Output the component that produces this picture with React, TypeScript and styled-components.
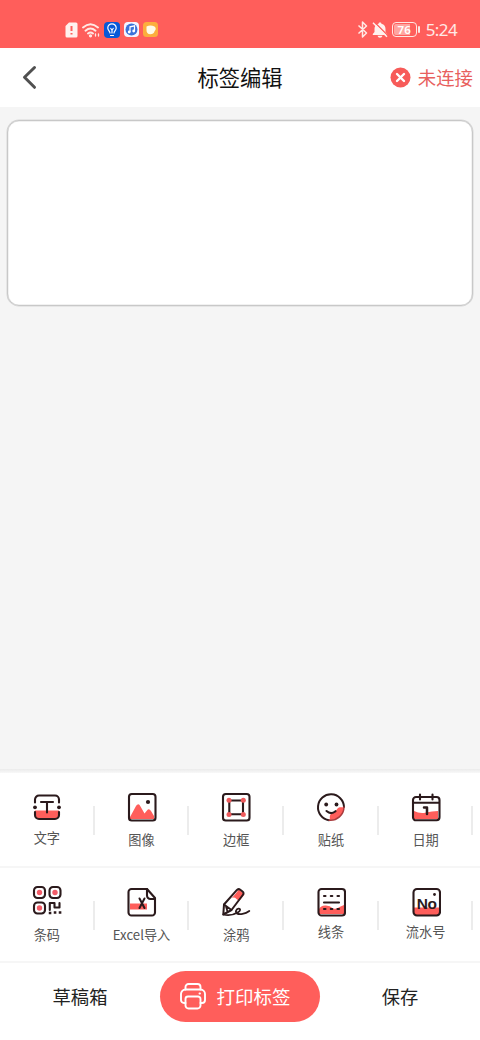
import React from 'react';
import styled, { createGlobalStyle } from 'styled-components';

const RED = '#ff5e5b';
const INK = '#2b1a1c';

const GlobalStyle = createGlobalStyle`
  * { box-sizing: border-box; }
  body {
    margin: 0;
    background: #fff;
    font-family: 'Noto Sans CJK SC', 'Noto Sans', sans-serif;
  }
  svg { display: block; flex: none; }
`;

const Screen = styled.div`
  width: 480px;
  height: 1040px;
  display: flex;
  flex-direction: column;
  background: #fff;
  overflow: hidden;
`;

const StatusBar = styled.header`
  height: 48px;
  flex: none;
  display: flex;
  justify-content: space-between;
  padding: 12px 23px 0 65px;
  background: ${RED};
`;

const StatusGroup = styled.div<{ $gap: number }>`
  display: flex;
  align-items: center;
  gap: ${p => p.$gap}px;
  height: 35px;
`;

const Battery = styled.div`
  display: flex;
  align-items: center;
  gap: 1px;
  &::after {
    content: '';
    width: 2px;
    height: 7px;
    border-radius: 1px;
    background: #ffe6e2;
  }
`;

const BatteryLevel = styled.span`
  width: 25px;
  height: 15px;
  border: 1.5px solid #ffe6e2;
  border-radius: 4px;
  background: linear-gradient(90deg, #ffa5a0 76%, transparent 76%) content-box;
  padding: 1px;
  color: #fff;
  font: 600 11.5px/11px 'Noto Sans', sans-serif;
  text-align: center;
`;

const Clock = styled.span`
  margin-left: 2px;
  color: #ffe9e6;
  font: 400 17px/20px 'Noto Sans', sans-serif;
  letter-spacing: -0.6px;
  padding-top: 1px;
`;

const TitleBar = styled.nav`
  height: 59px;
  flex: none;
  display: grid;
  grid-template-columns: 1fr auto 1fr;
  align-items: center;
  padding: 0 7px 0 21px;
`;

const Title = styled.h1`
  margin: -2px 14px 0 0;
  color: #111;
  font-size: 21.3px;
  line-height: 30px;
  font-weight: 400;
`;

const Connection = styled.div`
  display: flex;
  align-items: center;
  justify-content: flex-end;
  gap: 7px;
  color: #e8605d;
  font-size: 18.4px;
  line-height: 28px;
  margin-top: -1px;
`;

const Workspace = styled.main`
  flex: none;
  height: 666px;
  padding: 13px 7px 0;
  background: linear-gradient(#f5f5f5, #f5f5f5 662px, #ebebeb 662px, #f8f8f8 666px);
`;

const LabelCanvas = styled.div`
  height: 186px;
  border: 1px solid #c8c8c8;
  border-radius: 12px;
  background: #fff;
  box-shadow: 0 0 0 0.5px #d8d8d8, inset 0 0 0 0.5px #e4e4e4;
`;

const ToolRow = styled.section<{ $height: number }>`
  height: ${p => p.$height}px;
  flex: none;
  display: grid;
  grid-template-columns: repeat(5, 94.7px);
  border-bottom: 2px solid #f6f6f6;
`;

const Tool = styled.button<{ $top: number }>`
  display: flex;
  flex-direction: column;
  align-items: center;
  padding: ${p => p.$top}px 1px 0 0;
  border: 0;
  background: linear-gradient(#ececec, #ececec) right 0 top 33px / 2px 29px no-repeat;
  font-family: inherit;
`;

const ToolLabel = styled.span<{ $gap: number }>`
  margin-top: ${p => p.$gap}px;
  color: #555;
  font-size: 13.2px;
  line-height: 20px;
  white-space: nowrap;
`;

const ActionBar = styled.footer`
  height: 77px;
  flex: none;
  display: grid;
  grid-template-columns: 160px 160px 160px;
  padding-top: 8px;
`;

const TextAction = styled.button`
  height: 51px;
  padding: 0 0 2px;
  border: 0;
  background: none;
  color: #222;
  font: 400 18.3px/28px 'Noto Sans CJK SC', sans-serif;
`;

const PrintAction = styled.button`
  height: 51px;
  display: flex;
  align-items: center;
  justify-content: center;
  gap: 9px;
  padding: 0 10px 2px 0;
  border: 0;
  border-radius: 26px;
  background: ${RED};
  color: #fff;
  font: 400 18.5px/28px 'Noto Sans CJK SC', sans-serif;
`;

const Icon = ({ children }: { children: React.ReactNode }) => (
  <svg width="30" height="30" viewBox="0 0 30 30" fill="none" stroke={INK} strokeWidth="2.1" strokeLinecap="round" strokeLinejoin="round">
    {children}
  </svg>
);

const TextIcon = () => (
  <Icon>
    <path d="M3 18.5h24V23a4 4 0 0 1-4 4H7a4 4 0 0 1-4-4z" fill={RED} stroke="none" />
    <path d="M3 10.500V7.500a4 4 0 0 1 4-4h16a4 4 0 0 1 4 4v3M3 20v3a4 4 0 0 0 4 4h16a4 4 0 0 0 4-4v-3" />
    <path d="M9 10h12M15 10v10.500" />
    <circle cx="3" cy="15.300" r="1.900" fill={INK} stroke="none" />
    <circle cx="27" cy="15.300" r="1.900" fill={INK} stroke="none" />
  </Icon>
);

const ImageIcon = () => (
  <Icon>
    <path d="M2.500 26 9 14Q11.500 10.500 13.500 14.500L17.500 21.500 20 18.500Q22 16 24 19L27 24v3H3z" fill={RED} stroke="none" />
    <rect x="2" y="2" width="26.500" height="26.500" rx="2.800" />
    <circle cx="21" cy="10" r="2.100" fill={INK} stroke="none" />
  </Icon>
);

const FrameIcon = () => (
  <Icon>
    <rect x="2" y="2" width="26.500" height="26.500" rx="2.800" />
    <rect x="8.300" y="8.500" width="13.700" height="13.700" />
    <g fill="#ee5a5c" stroke="none">
      <circle cx="8" cy="8.300" r="2.500" /><circle cx="22.300" cy="8.300" r="2.500" />
      <circle cx="8" cy="22.500" r="2.500" /><circle cx="22.300" cy="22.500" r="2.500" />
    </g>
  </Icon>
);

const StickerIcon = () => (
  <Icon>
    <path d="M14 28C13 20.500 16 22 19 19.500S21 14.500 28 15.500C28 23 22 28 14 28z" fill={RED} stroke="none" />
    <path d="M13 28.200A13 13 0 1 1 28 15" strokeWidth="2" />
    <path d="M13 28.200A13.500 13.500 0 0 0 28 15" strokeWidth="1.500" stroke="#a93c3e" />
    <path d="M10.500 19q4.500 4 9 .2" />
    <circle cx="10.200" cy="12.500" r="1.900" fill={INK} stroke="none" />
    <circle cx="20.500" cy="12.500" r="1.900" fill={INK} stroke="none" />
  </Icon>
);

const DateIcon = () => (
  <Icon>
    <path d="M3 19q6 3 12 1.500T27 19v8H3z" fill={RED} stroke="none" />
    <rect x="2" y="5" width="26.500" height="23.300" rx="3" />
    <path d="M2 10.800h26M9 2.500v5M21.500 2.500v5" />
    <path d="M13 15.500h3V22" strokeWidth="2.500" />
  </Icon>
);

const CodeIcon = () => (
  <Icon>
    <rect x="2" y="2" width="11" height="11" rx="3.500" />
    <rect x="17.500" y="2" width="11" height="11" rx="3.500" />
    <rect x="2" y="17.500" width="11" height="11" rx="3.500" />
    <g fill="#f35c68" stroke="none">
      <circle cx="7.500" cy="7.500" r="2.700" /><circle cx="23" cy="7.500" r="2.700" /><circle cx="7.500" cy="23" r="2.700" />
    </g>
    <path d="M17.800 25v-7h4.700v4.500h5v-4.500" />
    <path d="M18 28h.1M23 27.500h.1M28 27.500h.1" strokeWidth="2.500" strokeLinecap="square" />
  </Icon>
);

const ExcelIcon = () => (
  <Icon>
    <path d="M3 16.500h17v6H3z" fill={RED} stroke="none" />
    <path d="M4.500 2H20l8 9v14.500a3 3 0 0 1-3 3H4.500a3 3 0 0 1-3-3V5a3 3 0 0 1 3-3z" />
    <path d="M20 2v6.500a3.500 3.500 0 0 0 3.500 3.500H28" />
    <path d="M12.500 11.500l5 9.500M17.500 11.500l-5 9.500" strokeWidth="2" />
  </Icon>
);

const DoodleIcon = () => (
  <Icon>
    <path d="M10.500 11.500Q13 9.500 15.500 12t4 .5L23.500 7.500 18 2.500z" fill={RED} stroke="none" />
    <path d="M3 17.500 15.500 3.300q1.800-2 3.800-.5l2.200 1.700q1.900 1.500.3 3.500L10.500 23 2.300 27.500z" strokeWidth="2" />
    <path d="M3 17.500 10.500 23M5 19.500 6.500 24.500" strokeWidth="1.800" />
    <path d="M2.300 27.500C8 29 13.500 27.500 17.500 25c2.500-1.700 1.800-3.500 0-3.300-2.300.3-3.500 3-1.700 4.500 2.500 2 8.500.8 12.500-2.200" strokeWidth="1.800" />
  </Icon>
);

const LinesIcon = () => (
  <Icon>
    <path d="M3 22q2-4 7-3.500 4 .2 7 3 4 1 6.500-1.500l4.500-2V27H3z" fill={RED} stroke="none" />
    <rect x="2.500" y="2" width="26.500" height="26.500" rx="3" />
    <path d="M8 15.500h15" />
    <path d="M8 9h1.500M14.800 9h1.500M21.500 9H23M8 22h1.500M14.800 22h1.500M21.500 22H23" />
  </Icon>
);

const SerialText = styled.text`
  font-family: 'Liberation Sans', sans-serif;
  font-size: 15.5px;
  font-weight: 700;
  letter-spacing: -0.6px;
  fill: ${INK};
  stroke: none;
`;

const SerialIcon = () => (
  <Icon>
    <path d="M3 20.500h25V28H3z" fill={RED} stroke="none" />
    <rect x="2.500" y="2" width="26.500" height="26.500" rx="3.500" />
    <SerialText x="5.800" y="21.800">No</SerialText>
    <circle cx="23.500" cy="7.500" r="1.400" fill={INK} stroke="none" />
  </Icon>
);

type ToolItem = { label: string; icon: React.ReactNode; top: number; gap: number };

const insertTools: ToolItem[] = [
  { label: '文字', icon: <TextIcon />, top: 19, gap: 6 },
  { label: '图像', icon: <ImageIcon />, top: 19, gap: 8 },
  { label: '边框', icon: <FrameIcon />, top: 19, gap: 8 },
  { label: '贴纸', icon: <StickerIcon />, top: 19, gap: 8 },
  { label: '日期', icon: <DateIcon />, top: 19, gap: 8 },
];

const extraTools: ToolItem[] = [
  { label: '条码', icon: <CodeIcon />, top: 17, gap: 10 },
  { label: 'Excel导入', icon: <ExcelIcon />, top: 19, gap: 8 },
  { label: '涂鸦', icon: <DoodleIcon />, top: 19, gap: 8 },
  { label: '线条', icon: <LinesIcon />, top: 19, gap: 5 },
  { label: '流水号', icon: <SerialIcon />, top: 19, gap: 5 },
];

const Tools = ({ items, height }: { items: ToolItem[]; height: number }) => (
  <ToolRow $height={height}>
    {items.map(t => (
      <Tool key={t.label} $top={t.top}>
        {t.icon}
        <ToolLabel $gap={t.gap}>{t.label}</ToolLabel>
      </Tool>
    ))}
  </ToolRow>
);

export default function App() {
  return (
    <Screen>
      <GlobalStyle />
      <StatusBar>
        <StatusGroup $gap={4}>
          <svg width="13" height="16" viewBox="0 0 13 16">
            <path d="M4 .5h7a1.500 1.500 0 0 1 1.500 1.500v12a1.500 1.500 0 0 1-1.500 1.500H2A1.500 1.500 0 0 1 .5 14V4z" fill="#fff1ee" />
            <path d="M6.500 4v5M6.500 11v1.500" stroke={RED} strokeWidth="2" />
          </svg>
          <svg width="18" height="16" viewBox="0 0 18 16" fill="none" stroke="#ffe9e5" strokeWidth="1.900" strokeLinecap="round">
            <path d="M1 5.500q7.500-6.500 15 0M3.500 8.700q5-4.400 10 0M6 11.500q2.500-2 5 0" />
            <circle cx="8.500" cy="13.800" r=".7" fill="#ffe9e5" />
            <path d="M13.500 12v2M16.500 12v2" strokeWidth="1.300" />
          </svg>
          <svg width="16" height="16" viewBox="0 0 16 16" fill="none" stroke="#fff" strokeWidth="1.200" strokeLinecap="round">
            <rect width="16" height="16" rx="4" fill="#0759d8" stroke="none" />
            <path d="M6 11C6 9 3.800 8.500 3.800 6a4.200 4.200 0 0 1 8.400 0c0 2.500-2.200 3-2.200 5M6.500 13.500h3M8 11V8M6.800 6.500 8 8l1.200-1.500" />
          </svg>
          <svg width="15" height="15" viewBox="0 0 15 15">
            <rect width="15" height="15" rx="4" fill="#f4f4ff" />
            <circle cx="7.500" cy="7.500" r="6" fill="#3c72d8" />
            <path d="M6 10V4.800l4.500-1V9" stroke="#fff" strokeWidth="1.200" fill="none" />
            <circle cx="5.200" cy="10" r="1.400" fill="#fff" /><circle cx="9.700" cy="9" r="1.400" fill="#fff" />
          </svg>
          <svg width="15" height="15" viewBox="0 0 15 15">
            <rect width="15" height="15" rx="3.500" fill="#fcae3d" />
            <path d="M3.500 4.500q4-2 8 0c1.700 1 1.500 3.500.3 4.200C11 11.500 9.500 12.200 7.500 12.200c-3 0-4-2-4-4z" fill="#fffbe8" />
          </svg>
        </StatusGroup>
        <StatusGroup $gap={4}>
          <svg width="11" height="17" viewBox="0 0 11 17" fill="none" stroke="#ffe9e5" strokeWidth="1.500" strokeLinejoin="round">
            <path d="M1.500 4.500 9.500 12l-4 4V1l4 4-8 7.500" />
          </svg>
          <svg width="16" height="16" viewBox="0 0 16 16">
            <path d="M8 .5c.9 0 1.400.5 1.400 1.200C12.500 2.400 13.500 4.500 13.500 7v3l1.700 2v1H.8V12l1.700-2V7c0-2.500 1-4.600 4.100-5.300 0-.7.5-1.200 1.400-1.200zM5.500 13.700h5q-.5 2-2.500 2t-2.500-2z" fill="#fff1ee" />
            <path d="M2 -.3 16 13.700" stroke={RED} strokeWidth="1.300" />
            <path d="M1 .8 15 14.800" stroke="#fff1ee" strokeWidth="1.500" />
          </svg>
          <Battery><BatteryLevel>76</BatteryLevel></Battery>
          <Clock>5:24</Clock>
        </StatusGroup>
      </StatusBar>
      <TitleBar>
        <svg width="17" height="26" viewBox="0 0 17 26" fill="none" stroke="#505050" strokeWidth="3" strokeLinecap="round" strokeLinejoin="round">
          <path d="M13.500 2.500 3.500 12.300l10 10" />
        </svg>
        <Title>标签编辑</Title>
        <Connection>
          <svg width="21" height="21" viewBox="0 0 21 21">
            <circle cx="10.500" cy="10.500" r="10" fill="#f75b59" />
            <path d="m7 7 7 7M14 7l-7 7" stroke="#fff" strokeWidth="2.400" strokeLinecap="round" />
          </svg>
          未连接
        </Connection>
      </TitleBar>
      <Workspace>
        <LabelCanvas />
      </Workspace>
      <Tools items={insertTools} height={95} />
      <Tools items={extraTools} height={95} />
      <ActionBar>
        <TextAction>草稿箱</TextAction>
        <PrintAction>
          <svg width="28" height="28" viewBox="0 0 28 28" fill="none" stroke="#fff" strokeWidth="1.900" strokeLinejoin="round" strokeLinecap="round">
            <path d="M6.500 7.500V5a3 3 0 0 1 3-3h9a3 3 0 0 1 3 3v2.500" />
            <path d="M6.500 21H5a3 3 0 0 1-3-3v-6a4.500 4.500 0 0 1 4.500-4.500h15A4.500 4.500 0 0 1 26 12v6a3 3 0 0 1-3 3h-1.500" />
            <path d="M9 14.500h10a2.500 2.500 0 0 1 2.500 2.500v6.500a3 3 0 0 1-3 3h-9a3 3 0 0 1-3-3V17A2.500 2.500 0 0 1 9 14.500zM20.500 11.500h.5" />
          </svg>
          打印标签
        </PrintAction>
        <TextAction>保存</TextAction>
      </ActionBar>
    </Screen>
  );
}
